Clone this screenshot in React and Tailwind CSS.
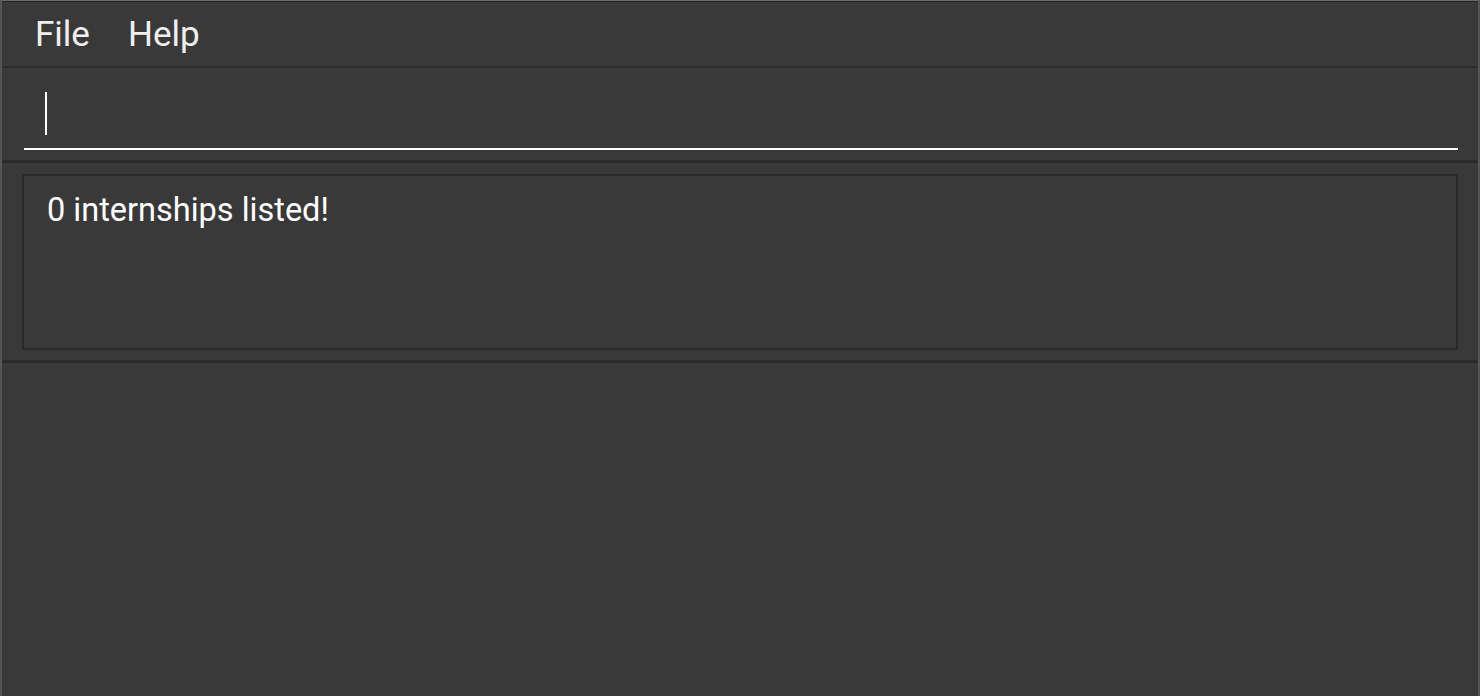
export default function App() {
    return (
        <div
            className="w-[1480px] h-[696px] flex flex-col bg-[#393939] text-white border-t border-[#6b6b6b] border-l-2 border-l-[#555555] border-r-2 border-r-[#555555] overflow-hidden"
            style={{ fontFamily: "Roboto, 'Liberation Sans', sans-serif" }}
        >
            <div className="h-px bg-[#222222]" />
            {/* menu */}
            <div className="h-[64px] flex items-center gap-[38px] pl-[33px] pt-[3px] text-[35px] text-[#f0f0f0]">
                <span>File</span>
                <span>Help</span>
            </div>
            <div className="h-[2px] bg-[#2c2c2c]" />
            {/* command box */}
            <div className="h-[92px] pl-[22px] pr-[20px] pt-[24px]">
                <div className="h-[58px] border-b-2 border-white relative">
                    <div className="absolute left-[21px] top-0 w-[2px] h-[43px] bg-white" />
                </div>
            </div>
            <div className="h-[3px] bg-[#2b2b2b]" />
            {/* result box */}
            <div className="h-[197px] px-[20px] pt-[11px]">
                <div className="h-[176px] border-2 border-[#2a2a2a] px-[23px] pt-[16px] text-[32.5px] leading-[36px]">
                    0 internships listed!
                </div>
            </div>
            <div className="h-[3px] bg-[#2b2b2b]" />
            <div className="flex-1" />
        </div>
    );
}
